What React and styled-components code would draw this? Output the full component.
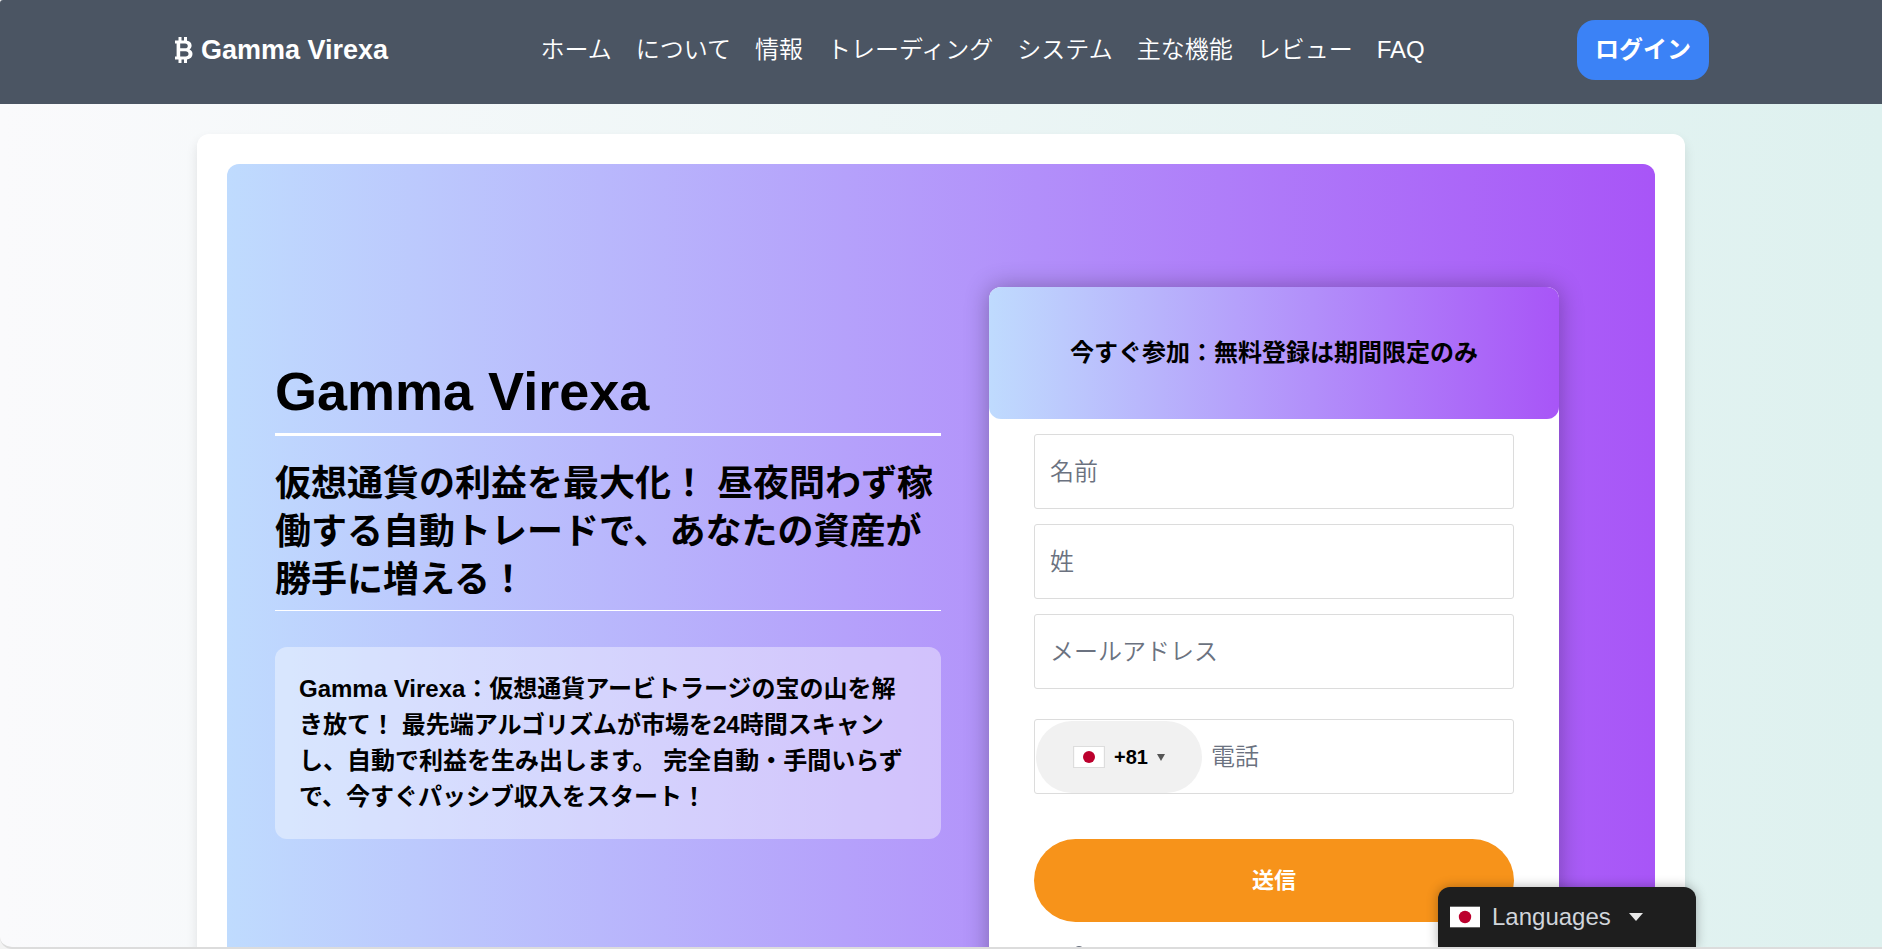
import React from 'react';
import styled, { createGlobalStyle } from 'styled-components';
import { FaLock } from 'react-icons/fa';

const links = [
  'ホーム',
  'について',
  '情報',
  'トレーディング',
  'システム',
  '主な機能',
  'レビュー',
  'FAQ',
];

const Flag = ({ bordered }) => (
  <FlagSvg viewBox='0 0 32 22' $bordered={bordered} aria-hidden='true'>
    <rect width='32' height='22' fill='#fff' />
    <circle cx='16' cy='11' r='6.6' fill='#bc002d' />
  </FlagSvg>
);

const BitcoinIcon = () => (
  <svg width='18' height='26' viewBox='0 0 18 26' aria-hidden='true'>
    <path
      fill='currentColor'
      fillRule='evenodd'
      d='M3.5 0h3v3.5h2.5V0h3v3.8c2.8.5 4.6 2.2 4.6 4.8 0 1.700-.8 3-2.100 3.900 1.900.800 3 2.400 3 4.500 0 3-2.100 5-5.500 5.400V26H9v-3.500H6.500V26h-3v-3.500H0v-3h1.600v-13H0v-3h3.500V0zM5.200 6.600v4.700h4.900c1.700 0 2.700-.900 2.700-2.300 0-1.500-1-2.400-2.700-2.400H5.200zm0 7.700v5.100h5.300c1.900 0 3-.900 3-2.500s-1.100-2.600-3-2.600H5.200z'
    />
  </svg>
);

const App = () => {
  return (
    <Page>
      <GlobalStyle />
      <Header>
        <Bar>
          <Logo href='#'>
            <BitcoinIcon />
            Gamma Virexa
          </Logo>
          <Nav>
            {links.map((link) => (
              <NavLink href='#' key={link}>
                {link}
              </NavLink>
            ))}
          </Nav>
          <LoginButton type='button'>ログイン</LoginButton>
        </Bar>
      </Header>
      <Main>
        <Card>
          <Hero>
            <Intro>
              <Title>Gamma Virexa</Title>
              <Subtitle>
                仮想通貨の利益を最大化！ 昼夜問わず稼働する自動トレードで、あなたの資産が勝手に増える！
              </Subtitle>
              <Summary>
                Gamma Virexa：仮想通貨アービトラージの宝の山を解き放て！
                最先端アルゴリズムが市場を24時間スキャンし、自動で利益を生み出します。
                完全自動・手間いらずで、今すぐパッシブ収入をスタート！
              </Summary>
            </Intro>
            <SignUp>
              <SignUpTitle>今すぐ参加：無料登録は期間限定のみ</SignUpTitle>
              <Form>
                <Field placeholder='名前' aria-label='名前' />
                <Field placeholder='姓' aria-label='姓' />
                <Field
                  type='email'
                  placeholder='メールアドレス'
                  aria-label='メールアドレス'
                />
                <PhoneField>
                  <CodeButton type='button'>
                    <Flag bordered />
                    +81
                    <Caret $size={4} $height={7} $color='#555' />
                  </CodeButton>
                  <PhoneInput type='tel' placeholder='電話' aria-label='電話' />
                </PhoneField>
                <SubmitButton type='submit'>送信</SubmitButton>
                <Secure>
                  <FaLock size={18} />
                </Secure>
              </Form>
            </SignUp>
          </Hero>
        </Card>
      </Main>
      <LanguageButton type='button'>
        <Flag />
        Languages
        <Caret $size={7} $height={8} $color='#e8e8e8' />
      </LanguageButton>
    </Page>
  );
};

const GlobalStyle = createGlobalStyle`
  *, *::before, *::after {
    box-sizing: border-box;
  }
  body {
    margin: 0;
    background: #f3f3f3;
    font-family: 'Liberation Sans', 'Noto Sans CJK JP', sans-serif;
    font-size: 24px;
    line-height: 36px;
    color: #000;
  }
  button, input {
    font: inherit;
  }
  button {
    border: 0;
    cursor: pointer;
  }
  a {
    color: inherit;
    text-decoration: none;
  }
  h1, h2, h3, p {
    margin: 0;
  }
`;

const Page = styled.div`
  position: relative;
  height: 100vh;
  overflow: hidden;
  border-bottom: 2px solid #dcdcdc;
  border-radius: 3px 0 0 12px;
  background: linear-gradient(to right, #fafafc, #def1ef);
`;

const Header = styled.header`
  padding: 20px 24px 24px;
  background: #4b5563;
  color: #fff;
`;

const Bar = styled.div`
  display: flex;
  align-items: center;
  justify-content: space-between;
  max-width: 1536px;
  margin: 0 auto;
`;

const Logo = styled.a`
  display: flex;
  align-items: center;
  gap: 8px;
  padding-left: 2px;
  font-size: 27px;
  font-weight: 700;
`;

const Nav = styled.nav`
  display: flex;
  gap: 24px;
`;

const NavLink = styled.a`
  font-weight: 350;
`;

const LoginButton = styled.button`
  padding: 12px 18px;
  border-radius: 18px;
  background: #3b82f6;
  color: #fff;
  font-weight: 700;
`;

const Main = styled.main`
  max-width: 1536px;
  margin: 0 auto;
  padding: 30px 24px;
`;

const Card = styled.section`
  padding: 30px;
  border-radius: 12px;
  background: #fff;
  box-shadow: 0 6px 12px rgba(0, 0, 0, 0.1);
`;

const Hero = styled.div`
  display: grid;
  grid-template-columns: 1fr 1fr;
  align-items: start;
  padding: 123px 0;
  border-radius: 12px;
  background: linear-gradient(to right, #bfdbfe, #a855f7);
`;

const Intro = styled.div`
  padding: 72px 0 0 48px;
`;

const Title = styled.h1`
  padding-bottom: 9px;
  border-bottom: 3px solid #fff;
  font-size: 54px;
  line-height: 65px;
`;

const Subtitle = styled.h2`
  padding: 24px 0 6px;
  border-bottom: 1px solid #fff;
  font-size: 36px;
  line-height: 48px;
`;

const Summary = styled.p`
  margin-top: 36px;
  padding: 24px;
  border-radius: 12px;
  background: rgba(255, 255, 255, 0.4);
  font-weight: 600;
`;

const SignUp = styled.div`
  width: 80%;
  max-width: 570px;
  margin-left: 48px;
  border-radius: 12px;
  background: #fff;
  box-shadow: 0 0 24px rgba(0, 0, 0, 0.3);
`;

const SignUpTitle = styled.h3`
  padding: 48px 24px;
  border-radius: 12px;
  background: linear-gradient(to right, #bfdbfe, #a855f7);
  font-size: 24px;
  text-align: center;
`;

const Form = styled.form`
  display: flex;
  flex-direction: column;
  gap: 15px;
  padding: 15px 45px 120px;
`;

const Field = styled.input`
  width: 100%;
  height: 75px;
  padding: 0 15px;
  border: 1px solid #dcdcdc;
  border-radius: 3px;
  background: #fff;
  font-weight: 350;
  &::placeholder {
    color: #6b7280;
    opacity: 1;
  }
`;

const PhoneField = styled.div`
  display: flex;
  height: 75px;
  margin: 15px 0 30px;
  padding: 1px 0 0 1px;
  border: 1px solid #dcdcdc;
  border-radius: 3px;
`;

const CodeButton = styled.button`
  display: flex;
  align-items: center;
  justify-content: center;
  gap: 9px;
  width: 166px;
  border-radius: 36px;
  background: #f1f1f1;
  color: #000;
  font-size: 20px;
  font-weight: 700;
`;

const PhoneInput = styled.input`
  flex: 1;
  min-width: 0;
  padding: 0 9px;
  border: 0;
  background: none;
  font-weight: 350;
  &::placeholder {
    color: #6b7280;
    opacity: 1;
  }
`;

const SubmitButton = styled.button`
  height: 83px;
  border-radius: 42px;
  background: #f7931a;
  color: #fff;
  font-size: 22px;
  font-weight: 700;
`;

const Secure = styled.div`
  display: flex;
  padding: 9px 36px 0;
  color: #6b7280;
`;

const FlagSvg = styled.svg`
  width: ${(props) => (props.$bordered ? 32 : 30)}px;
  height: 22px;
  border: ${(props) => (props.$bordered ? '1px solid #ddd' : '0')};
`;

const Caret = styled.span`
  border: ${(props) => props.$size}px solid transparent;
  border-top: ${(props) => props.$height}px solid ${(props) => props.$color};
  border-bottom: 0;
`;

const LanguageButton = styled.button`
  position: absolute;
  right: 186px;
  bottom: 0;
  display: flex;
  align-items: center;
  gap: 12px;
  width: 258px;
  height: 60px;
  padding: 0 12px;
  border-radius: 12px 12px 0 0;
  background: #1e1e1e;
  color: #d1d5db;
  box-shadow: 0 0 12px rgba(0, 0, 0, 0.3);
  ${Caret} {
    margin-left: 6px;
  }
`;

export default App;
